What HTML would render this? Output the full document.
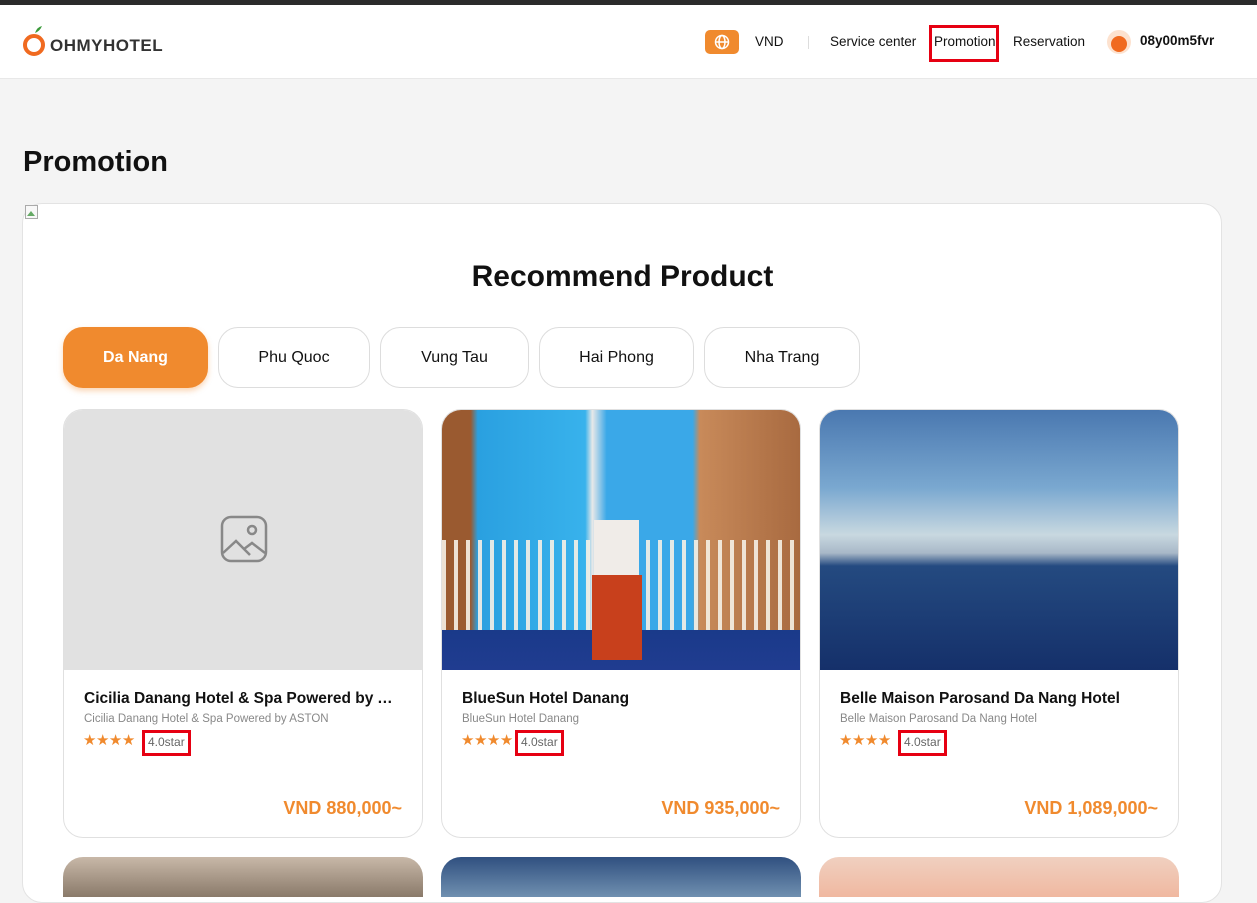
<!DOCTYPE html>
<html><head><meta charset="utf-8"><style>
*{box-sizing:border-box;margin:0;padding:0}
body{width:1257px;height:882px;overflow:hidden;background:#f4f4f4;font-family:"Liberation Sans",sans-serif;color:#111;position:relative}
.topbar{position:absolute;left:0;top:0;width:100%;height:5px;background:#2b2b2b}
.header{position:absolute;left:0;top:5px;width:100%;height:74px;background:#fff;border-bottom:1px solid #e8e8e8}
.abs{position:absolute}
.nav{font-size:13.5px;color:#111;top:34px}
h1{position:absolute;left:23px;top:146px;font-size:29px;font-weight:bold}
.box{position:absolute;left:22px;top:203px;width:1200px;height:700px;background:#fff;border:1px solid #e3e3e3;border-radius:20px}
.rp{position:absolute;left:0;width:1245px;top:260px;text-align:center;font-size:30px;font-weight:bold}
.tab{position:absolute;top:327px;height:61px;border:1px solid #ddd;border-radius:20px;background:#fff;font-size:16px;display:flex;align-items:center;justify-content:center}
.card{position:absolute;top:409px;width:360px;height:429px;border:1px solid #e0e0e0;border-radius:20px;background:#fff;overflow:hidden}
.img{height:260px}
.t{position:absolute;left:20px;top:280px;width:318px;font-size:15.5px;font-weight:bold;white-space:nowrap;overflow:hidden;text-overflow:ellipsis}
.s{position:absolute;left:20px;top:303px;font-size:11.5px;color:#888}
.st{position:absolute;left:19px;top:321px;font-size:15px;color:#f08a2e;letter-spacing:-0.5px}
.sb{position:absolute;top:320px;height:26px;border:3px solid #e60012;font-size:12px;color:#666;padding:2px 3px 0}
.p{position:absolute;right:20px;top:388px;font-size:18px;font-weight:bold;color:#f08a2e}
.row2{position:absolute;top:857px;width:360px;height:40px;border-radius:20px 20px 0 0}
</style></head><body>
<div class="topbar"></div>
<div class="header"></div>
<svg class="abs" style="left:22px;top:25px" width="26" height="34" viewBox="0 0 26 34"><path d="M13 8 Q15 2 20 1 Q18 6 13 8Z" fill="#3a9a3a"/><circle cx="12" cy="20" r="9" fill="none" stroke="#f06a20" stroke-width="4"/></svg>
<div class="abs" style="left:50px;top:36px;font-size:17px;font-weight:bold;color:#333;letter-spacing:0.5px">OHMYHOTEL</div>
<div class="abs" style="left:705px;top:30px;width:34px;height:24px;background:#f08a2e;border-radius:5px"></div>
<svg class="abs" style="left:714px;top:34px" width="16" height="16" viewBox="0 0 16 16" fill="none" stroke="#fff" stroke-width="1.5"><circle cx="8" cy="8" r="6.5"/><ellipse cx="8" cy="8" rx="3" ry="6.5"/><path d="M1.5 8h13"/></svg>
<div class="abs nav" style="left:755px">VND</div>
<div class="abs" style="left:808px;top:36px;width:1px;height:13px;background:#ddd"></div>
<div class="abs nav" style="left:830px">Service center</div>
<div class="abs" style="left:929px;top:25px;width:70px;height:37px;border:3px solid #e60012"></div>
<div class="abs nav" style="left:934px">Promotion</div>
<div class="abs nav" style="left:1013px">Reservation</div>
<div class="abs" style="left:1107px;top:30px;width:24px;height:24px;border-radius:50%;background:#fde2cf"></div>
<div class="abs" style="left:1111px;top:36px;width:16px;height:16px;border-radius:50%;background:#f06a20"></div>
<div class="abs nav" style="left:1140px;font-weight:bold;top:33px">08y00m5fvr</div>
<h1>Promotion</h1>
<div class="box"></div>
<div class="rp">Recommend Product</div>
<div class="tab" style="left:63px;width:145px;background:#f08a2e;border-color:#f08a2e;color:#fff;font-weight:bold;box-shadow:0 3px 6px rgba(240,138,46,.35)">Da Nang</div>
<div class="tab" style="left:218px;width:152px">Phu Quoc</div>
<div class="tab" style="left:380px;width:149px">Vung Tau</div>
<div class="tab" style="left:539px;width:155px">Hai Phong</div>
<div class="tab" style="left:704px;width:156px">Nha Trang</div>

<div class="card" style="left:63px"><div class="img" style="background:#e1e1e1;position:relative"><svg style="position:absolute;left:156px;top:105px" width="48" height="48" viewBox="0 0 48 48" fill="none" stroke="#888" stroke-width="2.5"><rect x="2" y="2" width="44" height="44" rx="9"/><circle cx="32" cy="15" r="4"/><path d="M3 38 L16 26 L30 40 M24 34 L32 28 L45 38"/></svg></div>
<div class="t">Cicilia Danang Hotel &amp; Spa Powered by ASTON</div><div class="s">Cicilia Danang Hotel &amp; Spa Powered by ASTON</div><div class="st">★★★★</div><div class="sb" style="left:78px">4.0star</div><div class="p">VND 880,000~</div></div>

<div class="card" style="left:441px"><div class="img" style="background:linear-gradient(90deg,#9a5a30 0 8%,#2aa0e0 10%,#38b2ec 40%,#e8e8e8 42%,#3aa8e8 46% 70%,#c88a5a 72%,#a86a40 100%);position:relative"><div style="position:absolute;left:0;right:0;top:130px;height:100px;background:repeating-linear-gradient(90deg,rgba(245,240,230,.9) 0 4px,transparent 4px 12px)"></div><div style="position:absolute;left:0;right:0;bottom:0;height:40px;background:linear-gradient(#1a3a8a,#203c90)"></div><div style="position:absolute;left:152px;top:110px;width:45px;height:60px;background:#f0ece8"></div><div style="position:absolute;left:150px;top:165px;width:50px;height:85px;background:#c8401c"></div></div>
<div class="t">BlueSun Hotel Danang</div><div class="s">BlueSun Hotel Danang</div><div class="st">★★★★</div><div class="sb" style="left:73px">4.0star</div><div class="p">VND 935,000~</div></div>

<div class="card" style="left:819px"><div class="img" style="background:linear-gradient(180deg,#4a78b0 0%,#7aa8d0 30%,#c8d8e0 48%,#a8b8c8 55%,#244a80 60%,#15306a 100%)"></div>
<div class="t">Belle Maison Parosand Da Nang Hotel</div><div class="s">Belle Maison Parosand Da Nang Hotel</div><div class="st">★★★★</div><div class="sb" style="left:78px">4.0star</div><div class="p">VND 1,089,000~</div></div>

<div class="row2" style="left:63px;background:linear-gradient(#c8b8a8,#8a7a6a)"></div>
<div class="row2" style="left:441px;background:linear-gradient(#305080,#7090b0)"></div>
<div class="row2" style="left:819px;background:linear-gradient(#f0d0c0,#f0b8a0)"></div>
<svg class="abs" style="left:25px;top:205px" width="14" height="14"><rect x="0.5" y="0.5" width="12" height="13" fill="#f8f8f8" stroke="#aaa"/><path d="M2 11 L6 6 L10 11Z" fill="#6a6"/></svg>
</body></html>
